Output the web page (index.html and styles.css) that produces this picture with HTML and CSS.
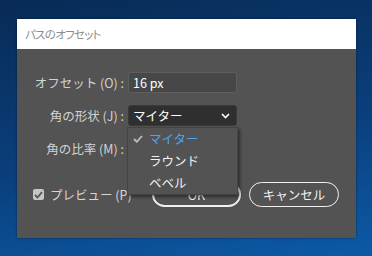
FILE: index.html
```html
<!DOCTYPE html>
<html lang="ja">
<head>
  <meta charset="UTF-8" />
  <title>パスのオフセット</title>
  <link rel="stylesheet" href="styles.css">
</head>
<body>

<div class="dialog">
  <div class="titlebar">パスのオフセット</div>

  <div class="panel">
    <div class="fields">
      <label class="lbl">オフセット (O) :</label>
      <div class="box input-box">16 px</div>

      <label class="lbl">角の形状 (J) :</label>
      <div class="select-wrap">
        <div class="box select-box">
          <span>マイター</span>
          <svg class="chev" width="9" height="6" viewBox="0 0 9 6"><polyline points="1,1 4.5,4.5 8,1" fill="none" stroke="#fff" stroke-width="1.6"/></svg>
        </div>
        <ul class="menu">
          <li class="on">
            <svg class="tick" width="10" height="8" viewBox="0 0 10 8"><polyline points="1,4 3.8,6.8 9,1" fill="none" stroke="#bdbdbd" stroke-width="1.8"/></svg>
            マイター
          </li>
          <li>ラウンド</li>
          <li>ベベル</li>
        </ul>
      </div>

      <label class="lbl">角の比率 (M) :</label>
      <div class="box input-box">4</div>
    </div>

    <div class="footer">
      <label class="preview">
        <span class="check">
          <svg width="9" height="8" viewBox="0 0 9 8"><polyline points="1,4 3.5,6.5 8,1.2" fill="none" stroke="#555" stroke-width="1.8"/></svg>
        </span>
        プレビュー (P)
      </label>
      <div class="buttons">
        <button class="btn ok">OK</button>
        <button class="btn">キャンセル</button>
      </div>
    </div>
  </div>
</div>

</body>
</html>
```

FILE: styles.css
```css
html, body {
  margin: 0;
  height: 100%;
}
body {
  font-family: "Noto Sans CJK JP", "Noto Sans", sans-serif;
  font-size: 12px;
  background: linear-gradient(170deg, #082b55 0%, #0a3f7c 55%, #0c5aa6 100%);
  padding-top: 19px;
  box-sizing: border-box;
}
.dialog {
  margin-left: 17px;
  width: 339px;
  height: 219px;
  background: #535353;
  box-shadow: 0 0 2px rgba(0, 0, 0, 0.5);
}
.titlebar {
  height: 30px;
  line-height: 30px;
  background: #fff;
  color: #8c8c8c;
  padding-left: 8px;
  font-size: 11.5px;
  font-feature-settings: "palt";
  letter-spacing: -0.7px;
}
.panel {
  padding-top: 23px;
}
.fields {
  display: grid;
  grid-template-columns: 107px 109px;
  column-gap: 4px;
  row-gap: 12px;
  align-items: center;
}
.lbl {
  text-align: right;
  color: #d2d2d2;
  font-size: 12.5px;
}
.box {
  height: 21px;
  box-sizing: border-box;
  border-radius: 3px;
  padding: 0 4px;
  line-height: 19px;
  color: #fff;
  font-size: 12.5px;
}
.input-box {
  background: #474747;
  border: 1px solid #5e5e5e;
}
.select-wrap {
  position: relative;
}
.select-box {
  background: #2f2f2f;
  border: 1px solid #3a3a3a;
  display: flex;
  align-items: center;
  justify-content: space-between;
}
.chev {
  margin-right: 2px;
}
.menu {
  position: absolute;
  top: 22px;
  left: -1px;
  width: 111px;
  margin: 0;
  padding: 0;
  list-style: none;
  background: #535353;
  border: 1px solid #444;
  box-sizing: border-box;
  box-shadow: 2px 2px 3px rgba(0, 0, 0, 0.45);
  z-index: 2;
}
.menu li {
  position: relative;
  height: 22px;
  line-height: 22px;
  padding-left: 21px;
  color: #f2f2f2;
  font-size: 12.5px;
}
.menu li.on {
  color: #4ba3f7;
}
.tick {
  position: absolute;
  left: 5px;
  top: 7px;
}
.footer {
  display: flex;
  align-items: center;
  margin-top: 23px;
  padding: 0 17px 0 16px;
}
.preview {
  display: flex;
  align-items: center;
  gap: 6px;
  color: #d6d6d6;
  font-size: 12.5px;
}
.check {
  width: 11px;
  height: 11px;
  background: #c6c6c6;
  border-radius: 2px;
  display: flex;
  align-items: center;
  justify-content: center;
}
.buttons {
  margin-left: auto;
  display: flex;
  gap: 8px;
}
.btn {
  width: 90px;
  height: 25px;
  border-radius: 13px;
  background: transparent;
  border: 1.5px solid #f0f0f0;
  color: #f2f2f2;
  font-family: inherit;
  font-size: 12.5px;
  padding: 0;
}
.btn.ok {
  width: 89px;
  border-width: 2px;
}
```
